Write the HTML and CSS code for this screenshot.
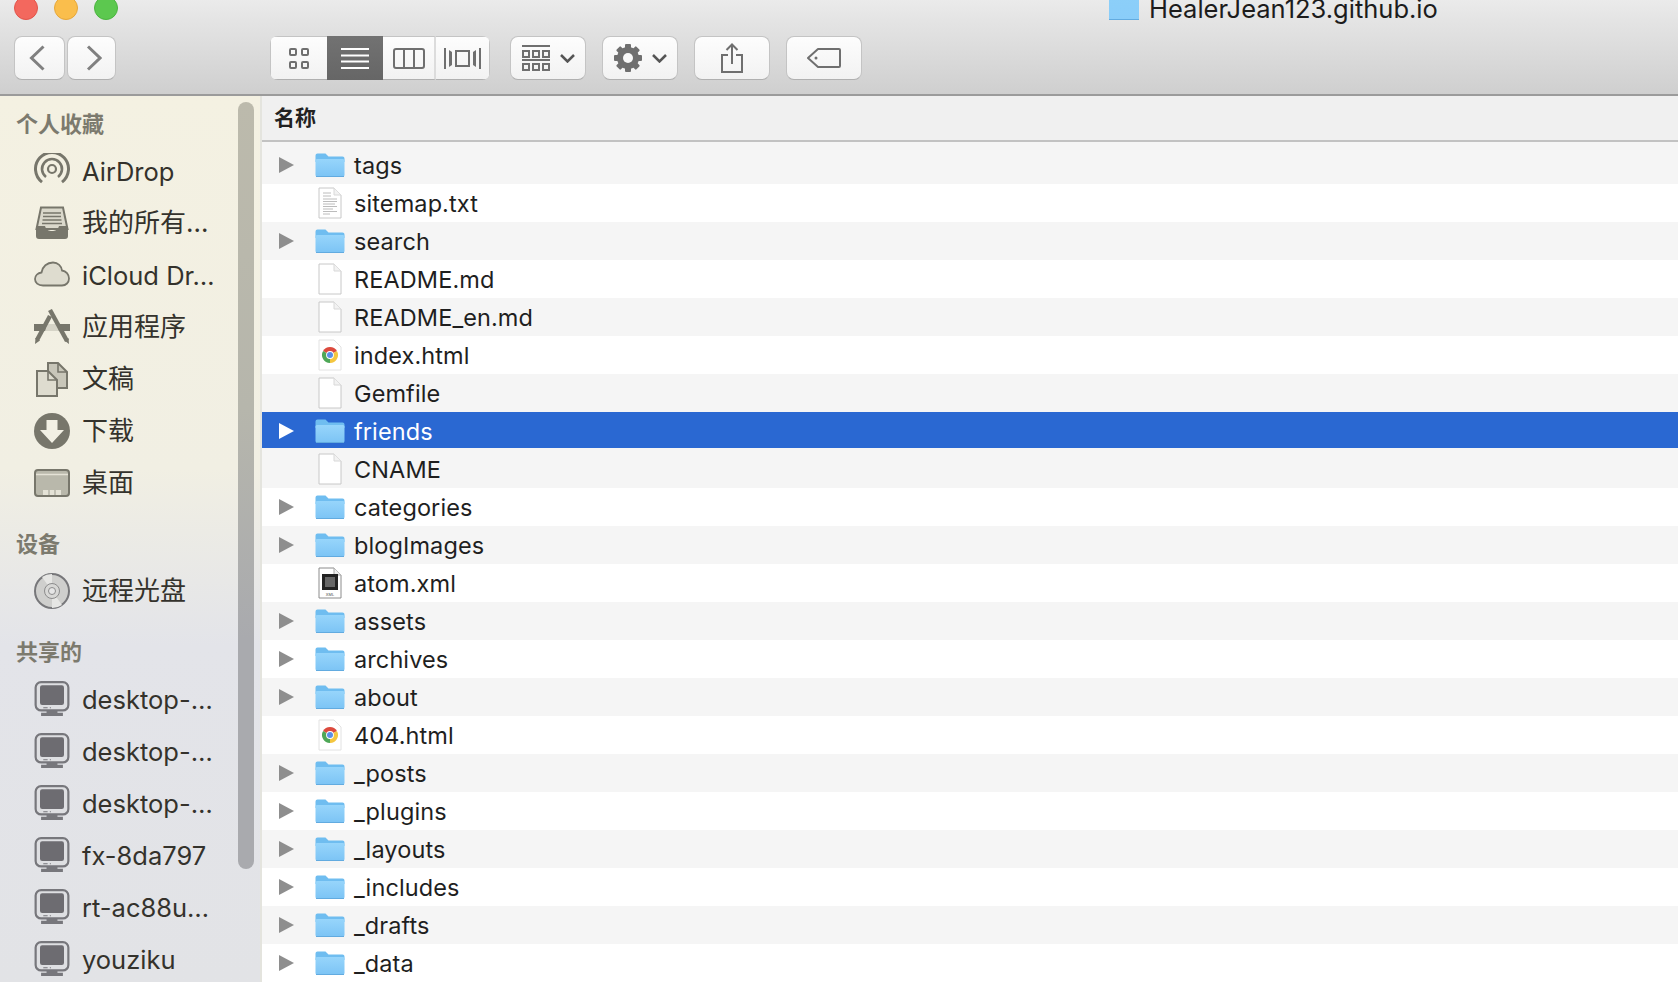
FILE: index.html
```html
<!DOCTYPE html>
<html lang="zh-CN">
<head>
<meta charset="UTF-8">
<meta name="viewport" content="width=device-width, initial-scale=1.0">
<title>HealerJean123.github.io</title>
<link rel="stylesheet" href="styles.css">
</head>
<body>
<svg class="sprite" xmlns="http://www.w3.org/2000/svg">
    <defs>
        <linearGradient id="folderFill" x1="0" y1="0" x2="0" y2="1">
            <stop offset="0" stop-color="#97d5fb"/>
            <stop offset="1" stop-color="#7cc4f5"/>
        </linearGradient>
    </defs>
    <symbol id="folder" viewBox="0 0 30 24">
        <path d="M0.5 9V2.5A2 2 0 0 1 2.5 0.5H10.5L13.5 3.5H27.5A2 2 0 0 1 29.5 5.5V9Z" fill="#6fbdf0"/>
        <rect x="0.5" y="6" width="29" height="17.5" rx="1.5" fill="url(#folderFill)"/>
        <path d="M1 23.5H29" stroke="#62abe0" stroke-width="1"/>
    </symbol>
    <symbol id="file" viewBox="0 0 24 32">
        <path d="M1 1H16L23 8V31H1Z" fill="#fff" stroke="#c8c8c8"/>
        <path d="M16 1V8H23" fill="#f2f2f2" stroke="#d8d8d8"/>
    </symbol>
    <symbol id="textFile" viewBox="0 0 24 32">
        <path d="M1 1H16L23 8V31H1Z" fill="#fff" stroke="#c8c8c8"/>
        <path d="M16 1V8H23" fill="#f2f2f2" stroke="#d8d8d8"/>
        <path d="M5 6H13M5 9H13M5 12H19M5 14.5H19M5 17H17M5 19.5H19M5 22H15M5 24.5H19M5 27H12" stroke="#bcbcbc" stroke-width="1"/>
    </symbol>
    <symbol id="chromeFile" viewBox="0 0 24 32">
        <path d="M1 1H16L23 8V31H1Z" fill="#fff" stroke="#e2e2e2"/>
        <path d="M12 16L5.07 12A8 8 0 0 1 18.93 12Z" fill="#dc4a3d"/>
        <path d="M12 16L18.93 12A8 8 0 0 1 12 24Z" fill="#f4c63f"/>
        <path d="M12 16L12 24A8 8 0 0 1 5.07 12Z" fill="#4ea756"/>
        <circle cx="12" cy="16" r="3.9" fill="#fff"/>
        <circle cx="12" cy="16" r="3" fill="#5a8fe6"/>
    </symbol>
    <symbol id="xmlFile" viewBox="0 0 24 32">
        <path d="M1 1H16L23 8V31H1Z" fill="#fff" stroke="#8c8c8c"/>
        <path d="M16 1V8H23" fill="#eee" stroke="#a8a8a8"/>
        <rect x="4" y="7" width="16" height="16" fill="#222"/>
        <rect x="7" y="10" width="10" height="10" fill="#666"/>
        <text x="12" y="28.5" font-size="4" text-anchor="middle" font-family="Liberation Sans" fill="#444">XML</text>
    </symbol>
    <symbol id="airdrop" viewBox="0 0 36 36">
        <g fill="none" stroke="#77766b">
            <circle cx="18" cy="16" r="4" stroke-width="2.200"/>
            <path d="M12 24A10 10 0 1 1 24 24" stroke-width="2.600"/>
            <path d="M8 29.100A16.500 16.500 0 1 1 28 29.100" stroke-width="3"/>
        </g>
    </symbol>
    <symbol id="allFiles" viewBox="0 0 36 36">
        <path d="M7 2.500H29L33.500 24H2.500Z" fill="#dad8cb" stroke="#77766b" stroke-width="2"/>
        <path d="M9 8H27M9 11.500H27M8.500 15H27.500M8 18.500H28" stroke="#77766b" stroke-width="1.500"/>
        <path d="M2 21H11C12 25 15 26 18 26S24 25 25 21H34V31A3 3 0 0 1 31 34H5A3 3 0 0 1 2 31Z" fill="#77766b"/>
    </symbol>
    <symbol id="cloud" viewBox="0 -2.500 36 36">
        <path d="M9 26C4 26 1 23 1 19.500C1 16 4 13.500 7.500 13C8.500 7 13 3 19 3C24 3 27.500 6.500 28 11C32 11.500 35 15 35 19C35 23 32 26 28 26Z" fill="#dedccf" stroke="#77766b" stroke-width="1.800"/>
    </symbol>
    <symbol id="apps" viewBox="0 0 36 36">
        <path d="M0 15H36V22H0Z" fill="#77766b"/>
        <path d="M13 15H23L25 22H11Z" fill="#d6d4c7"/>
        <path d="M16 1L33 32" stroke="#77766b" stroke-width="4.400" fill="none"/>
        <path d="M16 7L3 31" stroke="#77766b" stroke-width="4.400" fill="none"/>
        <path d="M1 35L1.500 29L6 31.500Z M35 35L30.500 31.500L34.500 29Z" fill="#77766b"/>
    </symbol>
    <symbol id="docs" viewBox="0 0 36 36">
        <path d="M14 2H24L33 11V27H14Z" fill="#c8c6b9" stroke="#77766b" stroke-width="2"/>
        <path d="M3 10H14L23 19V35H3Z" fill="#dedccf" stroke="#77766b" stroke-width="2"/>
        <path d="M14 10V19H23M24 2V11H33" fill="none" stroke="#77766b" stroke-width="1.600"/>
    </symbol>
    <symbol id="download" viewBox="0 0 36 36">
        <circle cx="18" cy="18" r="18" fill="#77766b"/>
        <path d="M12.500 7H23.500V17H30L18 30L6 17H12.500Z" fill="#f2f0e4"/>
    </symbol>
    <symbol id="desktop" viewBox="0 -4 36 36">
        <rect x="1" y="1" width="34" height="26" rx="3" fill="#b9b8ab" stroke="#77766b" stroke-width="2"/>
        <path d="M2 5.500H34" stroke="#e4e2d6" stroke-width="1.500"/>
        <path d="M9 21H27V26H9Z" fill="#e4e2d6"/>
        <path d="M15 21V26M21 21V26" stroke="#9d9c90" stroke-width="1"/>
    </symbol>
    <symbol id="disc" viewBox="0 0 36 36">
        <circle cx="18" cy="18" r="17" fill="#cfcfcd" stroke="#77777a" stroke-width="2"/>
        <path d="M18 18L8 4A17 17 0 0 1 18 1ZM18 18L28 32A17 17 0 0 1 18 35Z" fill="#e6e6e4"/>
        <circle cx="18" cy="18" r="7.500" fill="#d8d8d6" stroke="#8c8c8c" stroke-width="1"/>
        <circle cx="18" cy="18" r="3.500" fill="#e6e6e6" stroke="#8c8c8c" stroke-width="1"/>
    </symbol>
    <symbol id="computer" viewBox="0 0 32 33">
        <rect x="1" y="1" width="30" height="26" rx="5" fill="#dedfe2" stroke="#77777c" stroke-width="2"/>
        <rect x="5" y="4" width="22" height="18" rx="2" fill="#6d6c71"/>
        <path d="M8 24.500H12M14 24.500H15" stroke="#77777c" stroke-width="1"/>
        <path d="M11 27H21V29H26V32H6V29H11Z" fill="#77777c"/>
    </symbol>
    <symbol id="triangle" viewBox="0 0 15 16">
        <path d="M0 0L15 8L0 16Z"/>
    </symbol>
</svg>

<div class="window">
    <header class="titlebar">
        <div class="title-row">
            <span class="light light-red"></span>
            <span class="light light-yellow"></span>
            <span class="light light-green"></span>
            <div class="window-title">
                <span class="title-folder"></span>
                <span class="title-text">HealerJean123.github.io</span>
            </div>
        </div>
        <div class="toolbar">
            <div class="nav-group">
                <button class="tool-btn nav-btn">
                    <svg width="16" height="26" viewBox="0 0 16 26"><path d="M14.500 1.500L2.500 13L14.500 24.500" fill="none" stroke="#808080" stroke-width="3"/></svg>
                </button>
                <button class="tool-btn nav-btn nav-btn-next">
                    <svg width="16" height="26" viewBox="0 0 16 26"><path d="M2 1.500L14 13L2 24.500" fill="none" stroke="#808080" stroke-width="3"/></svg>
                </button>
            </div>
            <div class="view-group">
                <button class="view-btn view-icons">
                    <svg width="21" height="21" viewBox="0 0 21 21"><g fill="none" stroke="#6f6f6f" stroke-width="2"><rect x="1" y="1" width="6" height="6" rx="1"/><rect x="13" y="1" width="6" height="6" rx="1"/><rect x="1" y="14" width="6" height="6" rx="1"/><rect x="13" y="14" width="6" height="6" rx="1"/></g></svg>
                </button>
                <button class="view-btn view-list">
                    <svg width="28" height="21" viewBox="0 0 28 21"><path d="M0 1H28M0 7.500H28M0 13.500H28M0 20H28" stroke="#fff" stroke-width="2"/></svg>
                </button>
                <button class="view-btn view-columns">
                    <svg width="32" height="21" viewBox="0 0 32 21"><g fill="none" stroke="#6f6f6f" stroke-width="2"><rect x="1" y="1" width="30" height="19" rx="2"/><path d="M11 1V20M21 1V20"/></g></svg>
                </button>
                <button class="view-btn view-cover">
                    <svg width="37" height="21" viewBox="0 0 37 21"><g fill="none" stroke="#6f6f6f" stroke-width="2"><rect x="12" y="3" width="13" height="15"/><path d="M1 0V21M36 0V21"/></g><path d="M5 2L8 4V17L5 19ZM32 2L29 4V17L32 19Z" fill="#6f6f6f"/></svg>
                </button>
            </div>
            <button class="tool-btn drop-btn">
                <svg width="28" height="26" viewBox="0 0 28 26"><g fill="none" stroke="#6f6f6f" stroke-width="2"><path d="M0 1H28M0 15H28"/><rect x="1" y="6" width="6" height="6"/><rect x="11" y="6" width="6" height="6"/><rect x="21" y="6" width="6" height="6"/><rect x="1" y="19" width="6" height="6"/><rect x="11" y="19" width="6" height="6"/><rect x="21" y="19" width="6" height="6"/></g></svg>
                <svg width="15" height="9" viewBox="0 0 15 9"><path d="M1 1L7.500 7.500L14 1" fill="none" stroke="#555" stroke-width="2.500"/></svg>
            </button>
            <button class="tool-btn drop-btn">
                <svg width="28" height="28" viewBox="0 0 28 28"><g fill="#6f6f6f"><rect x="11" y="0" width="6" height="28" rx="1"/><rect x="11" y="0" width="6" height="28" rx="1" transform="rotate(45 14 14)"/><rect x="11" y="0" width="6" height="28" rx="1" transform="rotate(90 14 14)"/><rect x="11" y="0" width="6" height="28" rx="1" transform="rotate(135 14 14)"/></g><circle cx="14" cy="14" r="8" fill="none" stroke="#6f6f6f" stroke-width="6"/><circle cx="14" cy="14" r="5" fill="#f8f8f8"/></svg>
                <svg width="15" height="9" viewBox="0 0 15 9"><path d="M1 1L7.500 7.500L14 1" fill="none" stroke="#555" stroke-width="2.500"/></svg>
            </button>
            <button class="tool-btn icon-btn">
                <svg width="22" height="30" viewBox="0 0 22 30"><g fill="none" stroke="#6f6f6f" stroke-width="2"><path d="M7 12H1V29H21V12H15"/><path d="M11 21V1.500M5.500 7L11 1.500L16.500 7"/></g></svg>
            </button>
            <button class="tool-btn icon-btn">
                <svg width="34" height="20" viewBox="0 0 34 20"><path d="M32 1H11L1 10L11 19H32A1 1 0 0 0 33 18V2A1 1 0 0 0 32 1Z" fill="none" stroke="#6f6f6f" stroke-width="2" stroke-linejoin="round"/><circle cx="9" cy="10" r="1.500" fill="#6f6f6f"/></svg>
            </button>
        </div>
    </header>

    <div class="main">
        <aside class="sidebar">
            <div class="side-content">
                <h3 class="side-title">个人收藏</h3>
                <a class="side-item"><svg class="side-icon"><use href="#airdrop"/></svg>AirDrop</a>
                <a class="side-item"><svg class="side-icon"><use href="#allFiles"/></svg><span class="cjk">我的所有…</span></a>
                <a class="side-item"><svg class="side-icon"><use href="#cloud"/></svg>iCloud Dr…</a>
                <a class="side-item"><svg class="side-icon"><use href="#apps"/></svg><span class="cjk">应用程序</span></a>
                <a class="side-item"><svg class="side-icon"><use href="#docs"/></svg><span class="cjk">文稿</span></a>
                <a class="side-item"><svg class="side-icon"><use href="#download"/></svg><span class="cjk">下载</span></a>
                <a class="side-item"><svg class="side-icon"><use href="#desktop"/></svg><span class="cjk">桌面</span></a>
                <h3 class="side-title side-title-gap">设备</h3>
                <a class="side-item"><svg class="side-icon"><use href="#disc"/></svg><span class="cjk">远程光盘</span></a>
                <h3 class="side-title side-title-gap">共享的</h3>
                <a class="side-item"><svg class="side-icon"><use href="#computer"/></svg>desktop-…</a>
                <a class="side-item"><svg class="side-icon"><use href="#computer"/></svg>desktop-…</a>
                <a class="side-item"><svg class="side-icon"><use href="#computer"/></svg>desktop-…</a>
                <a class="side-item"><svg class="side-icon"><use href="#computer"/></svg>fx-8da797</a>
                <a class="side-item"><svg class="side-icon"><use href="#computer"/></svg>rt-ac88u…</a>
                <a class="side-item"><svg class="side-icon"><use href="#computer"/></svg>youziku</a>
            </div>
            <div class="side-scroll"></div>
        </aside>

        <section class="files">
            <div class="files-head">名称</div>
            <ul class="file-list">
                <li class="row odd"><svg class="arrow"><use href="#triangle"/></svg><svg class="icon"><use href="#folder"/></svg>tags</li>
                <li class="row"><span class="arrow"></span><svg class="icon"><use href="#textFile"/></svg>sitemap.txt</li>
                <li class="row odd"><svg class="arrow"><use href="#triangle"/></svg><svg class="icon"><use href="#folder"/></svg>search</li>
                <li class="row"><span class="arrow"></span><svg class="icon"><use href="#file"/></svg>README.md</li>
                <li class="row odd"><span class="arrow"></span><svg class="icon"><use href="#file"/></svg>README_en.md</li>
                <li class="row"><span class="arrow"></span><svg class="icon"><use href="#chromeFile"/></svg>index.html</li>
                <li class="row odd"><span class="arrow"></span><svg class="icon"><use href="#file"/></svg>Gemfile</li>
                <li class="row selected"><svg class="arrow"><use href="#triangle"/></svg><svg class="icon"><use href="#folder"/></svg>friends</li>
                <li class="row odd"><span class="arrow"></span><svg class="icon"><use href="#file"/></svg>CNAME</li>
                <li class="row"><svg class="arrow"><use href="#triangle"/></svg><svg class="icon"><use href="#folder"/></svg>categories</li>
                <li class="row odd"><svg class="arrow"><use href="#triangle"/></svg><svg class="icon"><use href="#folder"/></svg>blogImages</li>
                <li class="row"><span class="arrow"></span><svg class="icon"><use href="#xmlFile"/></svg>atom.xml</li>
                <li class="row odd"><svg class="arrow"><use href="#triangle"/></svg><svg class="icon"><use href="#folder"/></svg>assets</li>
                <li class="row"><svg class="arrow"><use href="#triangle"/></svg><svg class="icon"><use href="#folder"/></svg>archives</li>
                <li class="row odd"><svg class="arrow"><use href="#triangle"/></svg><svg class="icon"><use href="#folder"/></svg>about</li>
                <li class="row"><span class="arrow"></span><svg class="icon"><use href="#chromeFile"/></svg>404.html</li>
                <li class="row odd"><svg class="arrow"><use href="#triangle"/></svg><svg class="icon"><use href="#folder"/></svg>_posts</li>
                <li class="row"><svg class="arrow"><use href="#triangle"/></svg><svg class="icon"><use href="#folder"/></svg>_plugins</li>
                <li class="row odd"><svg class="arrow"><use href="#triangle"/></svg><svg class="icon"><use href="#folder"/></svg>_layouts</li>
                <li class="row"><svg class="arrow"><use href="#triangle"/></svg><svg class="icon"><use href="#folder"/></svg>_includes</li>
                <li class="row odd"><svg class="arrow"><use href="#triangle"/></svg><svg class="icon"><use href="#folder"/></svg>_drafts</li>
                <li class="row"><svg class="arrow"><use href="#triangle"/></svg><svg class="icon"><use href="#folder"/></svg>_data</li>
            </ul>
        </section>
    </div>
</div>
</body>
</html>
```

FILE: styles.css
```css
html, body {
    margin: 0;
    height: 100%;
    overflow: hidden;
}
body {
    font-family: Inter, "Noto Sans CJK SC", sans-serif;
    background-color: #f5f5f5;
}
.sprite {
    display: block;
    width: 0;
    height: 0;
}

/* window top is cut off by the screenshot */
.window {
    margin-top: -4px;
    height: 986px;
    display: flex;
    flex-direction: column;
}
.titlebar {
    height: 100px;
    flex: none;
    box-sizing: border-box;
    border-bottom: 2px solid #9b9b9b;
    background: linear-gradient(#ececec, #e4e4e4 25%, #cfcfcf);
}
.title-row {
    height: 24px;
    padding-left: 14px;
    display: flex;
    gap: 16px;
}
.light {
    width: 24px;
    height: 24px;
    box-sizing: border-box;
    border-radius: 50%;
    border: 1px solid;
}
.light-red {
    background-color: #f3685e;
    border-color: #e2544a;
}
.light-yellow {
    background-color: #fabe4c;
    border-color: #e6a73a;
}
.light-green {
    background-color: #5cc84f;
    border-color: #4bb440;
}
.window-title {
    margin-left: 975px;
    display: flex;
    gap: 10px;
}
.title-folder {
    width: 30px;
    height: 24px;
    border-bottom: 1px solid #62abe0;
    box-sizing: border-box;
    background: linear-gradient(#8ccff9, #8acdf9);
}
.title-text {
    font-size: 25.5px;
    line-height: 26px;
    color: #1c1c1c;
}

.toolbar {
    margin-top: 16px;
    padding-left: 14px;
    display: flex;
}
.tool-btn {
    height: 44px;
    padding: 0;
    display: flex;
    align-items: center;
    justify-content: center;
    border: 1px solid #c4c4c4;
    border-bottom-color: #b0b0b0;
    border-radius: 8px;
    background: linear-gradient(#fdfdfd, #f2f2f2);
}
.nav-group {
    display: flex;
    gap: 2px;
    margin-right: 154px;
}
.nav-btn {
    width: 51px;
    padding-right: 5px;
}
.nav-btn-next {
    width: 49px;
    padding: 0 0 0 4px;
}
.view-group {
    display: flex;
    height: 44px;
    margin-right: 20px;
    border-radius: 8px;
    overflow: hidden;
    box-sizing: border-box;
}
.view-btn {
    padding: 0;
    height: 44px;
    display: flex;
    align-items: center;
    justify-content: center;
    border: 1px solid #c4c4c4;
    border-width: 1px 0;
    border-bottom-color: #b0b0b0;
    background: linear-gradient(#fdfdfd, #f2f2f2);
}
.view-icons {
    width: 57px;
    border-left-width: 1px;
}
.view-list {
    width: 56px;
    border: none;
    background: linear-gradient(#727272, #666);
}
.view-columns {
    width: 53px;
    border-right: 2px solid #dcdcdc;
}
.view-cover {
    width: 54px;
    border-right-width: 1px;
}
.drop-btn {
    width: 76px;
    gap: 10px;
    margin-right: 16px;
}
.icon-btn {
    width: 76px;
    margin-right: 16px;
}

.main {
    flex: 1;
    display: flex;
    min-height: 0;
}
.sidebar {
    width: 262px;
    flex: none;
    box-sizing: border-box;
    display: flex;
    overflow: hidden;
    border-right: 2px solid #e4e4de;
    background: linear-gradient(#f4f1e2, #f1efe3 42%, #e3e4e9 62%, #e2e3e6);
}
.side-content {
    width: 238px;
    flex: none;
    padding-top: 7px;
}
.side-scroll {
    width: 16px;
    height: 767px;
    margin-top: 6px;
    flex: none;
    border-radius: 8px;
    background: linear-gradient(#bcbaac, #b6b6ac 40%, #a9aaae 70%);
}
.side-title {
    margin: 0;
    height: 42px;
    padding-left: 16px;
    font-size: 22px;
    line-height: 42px;
    font-weight: bold;
    color: #7c7a6e;
}
.side-title-gap {
    margin-top: 14px;
}
.side-item {
    height: 52px;
    padding-left: 34px;
    display: flex;
    align-items: center;
    gap: 12px;
    font-size: 25.5px;
    color: #34322c;
    white-space: nowrap;
}
.side-icon {
    width: 36px;
    height: 36px;
    flex: none;
}
.cjk {
    padding-bottom: 6px;
    font-size: 26px;
}

.files {
    flex: 1;
    min-width: 0;
}
.files-head {
    height: 46px;
    padding-left: 12px;
    box-sizing: border-box;
    border-bottom: 2px solid #c2c2c2;
    background-color: #f0f0f0;
    font-size: 21px;
    line-height: 44px;
    font-weight: bold;
    color: #222;
}
.file-list {
    margin: 0;
    padding: 4px 0 0;
    list-style: none;
    background-color: #f5f5f5;
}
.row {
    height: 38px;
    display: flex;
    align-items: center;
    padding-left: 17px;
    font-size: 23.5px;
    letter-spacing: 0.1px;
    color: #1f1f1f;
    background-color: #fff;
}
.row.odd {
    background-color: #f5f5f5;
}
.row.selected {
    color: #fff;
    background: linear-gradient(#2a68d2 36px, #f5f5f5 36px);
}
.arrow {
    width: 15px;
    height: 16px;
    flex: none;
    margin-right: 21px;
    fill: #8e8e8e;
}
.selected .arrow {
    fill: #fff;
}
.icon {
    width: 30px;
    height: 32px;
    flex: none;
    margin-right: 9px;
}
```
